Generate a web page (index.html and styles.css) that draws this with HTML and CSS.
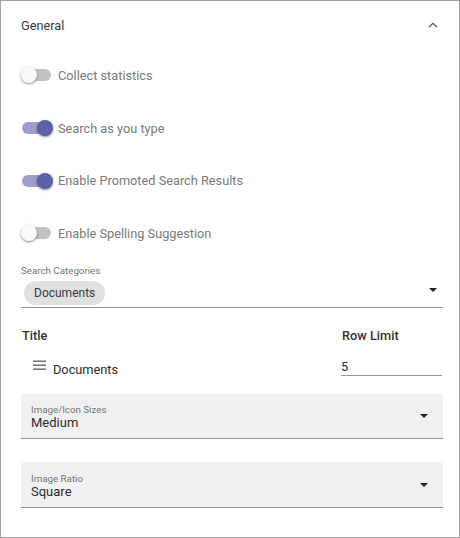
FILE: index.html
```html
<!DOCTYPE html>
<html>
<head>
<meta charset="utf-8">
<link rel="stylesheet" href="styles.css">
</head>
<body>
<div class="panel">
  <div class="panel-header">
    <span class="panel-title">General</span>
    <svg class="chevron" width="10" height="6" viewBox="0 0 10 6"><path d="M1 5.2 L5 1.2 L9 5.2" fill="none" stroke="#666" stroke-width="1.4"/></svg>
  </div>
  <div class="panel-body">
    <div class="toggle-row">
      <span class="toggle"><span class="track"></span><span class="thumb"></span></span>
      <span class="toggle-label">Collect statistics</span>
    </div>
    <div class="toggle-row">
      <span class="toggle on"><span class="track"></span><span class="thumb"></span></span>
      <span class="toggle-label">Search as you type</span>
    </div>
    <div class="toggle-row">
      <span class="toggle on"><span class="track"></span><span class="thumb"></span></span>
      <span class="toggle-label">Enable Promoted Search Results</span>
    </div>
    <div class="toggle-row">
      <span class="toggle"><span class="track"></span><span class="thumb"></span></span>
      <span class="toggle-label">Enable Spelling Suggestion</span>
    </div>

    <div class="chip-field">
      <div class="field-label">Search Categories</div>
      <div class="chip-row">
        <span class="chip">Documents</span>
        <span class="arrow arrow-chip"></span>
      </div>
    </div>

    <div class="cols-head">
      <span class="col-title">Title</span>
      <span class="col-limit">Row Limit</span>
    </div>
    <div class="item-row">
      <div class="item-title">
        <svg class="drag" width="13" height="10" viewBox="0 0 13 10"><rect x="0" y="0.5" width="13" height="1.4" fill="#666"/><rect x="0" y="4.5" width="13" height="1.4" fill="#666"/><rect x="0" y="8.5" width="13" height="1.4" fill="#666"/></svg>
        <span>Documents</span>
      </div>
      <div class="item-limit">5</div>
    </div>

    <div class="select-box first">
      <div class="select-text">
        <div class="field-label">Image/Icon Sizes</div>
        <div class="select-value">Medium</div>
      </div>
      <span class="arrow"></span>
    </div>
    <div class="select-box second">
      <div class="select-text">
        <div class="field-label">Image Ratio</div>
        <div class="select-value">Square</div>
      </div>
      <span class="arrow"></span>
    </div>
  </div>
</div>
</body>
</html>
```

FILE: styles.css
```css
* { box-sizing: border-box; }
html, body { margin: 0; padding: 0; background: #fff; }
body { font-family: Roboto, "Liberation Sans", Arial, sans-serif; }

.panel {
  width: 460px;
  height: 538px;
  border: 1px solid #a3a3a3;
  background: #fff;
}

.panel-header {
  height: 48px;
  padding: 0 21px 0 20px;
  display: flex;
  align-items: center;
  justify-content: space-between;
}
.panel-title { font-size: 12.75px; color: #3a3a3a; }
.chevron { display: block; margin-top: -1px; }

.panel-body {
  padding: 0 16px 0 20px;
}

.toggle-row {
  height: 52.7px;
  display: flex;
  align-items: center;
}
.toggle {
  position: relative;
  width: 37px;
  height: 16px;
  flex: none;
}
.toggle .track {
  position: absolute;
  left: 1px;
  top: 2px;
  width: 29px;
  height: 12px;
  border-radius: 6px;
  background: #c2c2c2;
}
.toggle .thumb {
  position: absolute;
  left: 0;
  top: 0;
  width: 16px;
  height: 16px;
  border-radius: 50%;
  background: #fafafa;
  box-shadow: 0 1px 3px rgba(0,0,0,0.35), 0 1px 1px rgba(0,0,0,0.14);
}
.toggle.on .track { background: #9d9fcb; }
.toggle.on .thumb { left: 16px; background: #5c5faa; }
.toggle-label { font-size: 12.75px; color: #7a7a7a; }

.field-label { font-size: 9.75px; line-height: 11px; color: #757575; }

.chip-field {
  padding-top: 5px;
  border-bottom: 1px solid #949494;
}
.chip-row {
  display: flex;
  align-items: center;
  justify-content: space-between;
  padding: 5px 6px 2px 3px;
}
.chip {
  height: 24px;
  padding: 0 10px;
  border-radius: 12px;
  background: #e0e0e0;
  font-size: 12px;
  line-height: 24px;
  color: #3a3a3a;
}
.arrow {
  width: 0;
  height: 0;
  border-left: 4px solid transparent;
  border-right: 4px solid transparent;
  border-top: 4px solid #222;
}
.arrow-chip { margin-top: -6px; }

.cols-head {
  display: flex;
  padding-top: 20px;
  font-size: 12.75px;
  line-height: 16px;
  font-weight: 500;
  color: #333;
}
.col-title { flex: 1; padding-left: 1px; }
.col-limit { width: 101px; }

.item-row {
  display: flex;
  align-items: center;
  margin-top: 15px;
}
.item-title {
  flex: 1;
  display: flex;
  align-items: center;
  padding-left: 12px;
  font-size: 12.75px;
  color: #2a2a2a;
}
.drag { display: block; margin-right: 7px; margin-top: -5px; }
.item-title span { padding-top: 3px; }
.item-limit {
  width: 101px;
  margin-right: 1px;
  font-size: 12.75px;
  line-height: 16px;
  color: #2a2a2a;
  border-bottom: 1px solid #949494;
}

.select-box {
  display: flex;
  align-items: center;
  justify-content: space-between;
  background: #f0f0f0;
  border-radius: 4px 4px 0 0;
  border-bottom: 1px solid #949494;
  padding: 10px 15px 7px 10px;
}
.select-box.first { margin-top: 17px; }
.select-box.second { margin-top: 23px; padding-top: 11px; }
.select-value { font-size: 13px; line-height: 16px; color: #2a2a2a; }
.select-box .arrow { margin-top: -2px; }
```
